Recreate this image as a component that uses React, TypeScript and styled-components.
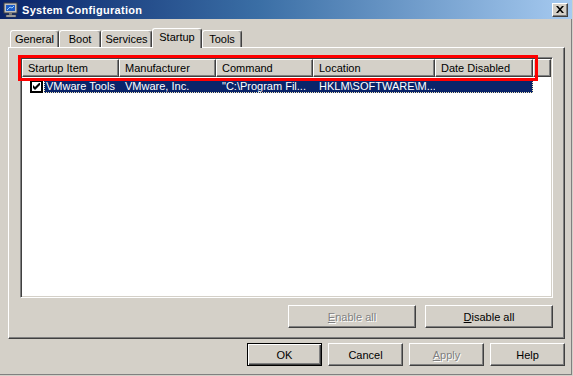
import React from 'react';
import styled, { createGlobalStyle } from 'styled-components';

const Global = createGlobalStyle`
  html, body { margin: 0; padding: 0; background: #D4D0C8; }
  body { font-family: "Liberation Sans", Arial, sans-serif; font-size: 11px; color: #000; }
  #root { width: 573px; height: 376px; }
`;

const Window = styled.div`
  width: 573px;
  height: 376px;
  box-sizing: border-box;
  background: #D4D0C8;
  display: flex;
  flex-direction: column;
  border-right: 1px solid #D4D0C8;
  border-bottom: 1px solid #D4D0C8;
  box-shadow: inset -1px -1px 0 #808080;
  overflow: hidden;
`;

const TitleBar = styled.div`
  height: 19px;
  flex: none;
  display: flex;
  align-items: center;
  padding: 0 3px 0 3px;
  background: linear-gradient(to right, #0A246A 0%, #3A6EA5 45%, #A6CAF0 100%);
  color: #fff;
  font-weight: bold;
  font-size: 11px;
`;

const TitleIcon = styled.svg`
  width: 16px;
  height: 16px;
  flex: none;
  margin-right: 3px;
`;

const TitleText = styled.span`
  flex: 1;
  white-space: nowrap;
  letter-spacing: 0.3px;
`;

const CloseButton = styled.div`
  width: 16px;
  height: 14px;
  box-sizing: border-box;
  background: #D4D0C8;
  border-top: 1px solid #fff;
  border-left: 1px solid #fff;
  border-right: 1px solid #404040;
  border-bottom: 1px solid #404040;
  box-shadow: inset -1px -1px 0 #808080;
  display: flex;
  align-items: center;
  justify-content: center;
  margin-right: 1px;
`;

const Body = styled.div`
  flex: 1;
  display: flex;
  flex-direction: column;
  padding: 9px 7px 0 8px;
`;

const TabStrip = styled.div`
  display: flex;
  align-items: flex-end;
  height: 19px;
  padding-left: 2px;
  position: relative;
  z-index: 1;
`;

const Tab = styled.div<{ $w: number; $active?: boolean }>`
  box-sizing: border-box;
  width: ${(p) => p.$w}px;
  height: ${(p) => (p.$active ? 20 : 17)}px;
  margin-bottom: ${(p) => (p.$active ? -1 : 0)}px;
  background: #D4D0C8;
  border-top: 1px solid #fff;
  border-left: 1px solid #fff;
  border-right: 1px solid #404040;
  box-shadow: inset -1px 0 0 #808080;
  border-radius: 3px 3px 0 0;
  display: flex;
  justify-content: center;
  align-items: flex-start;
  padding-top: 2px;
  white-space: nowrap;
`;

const Panel = styled.div`
  position: relative;
  box-sizing: border-box;
  height: 292px;
  flex: none;
  border-top: 1px solid #fff;
  border-left: 1px solid #fff;
  border-right: 1px solid #404040;
  border-bottom: 1px solid #404040;
  box-shadow: inset -1px -1px 0 #808080;
  padding: 9px 11px 0 11px;
  display: flex;
  flex-direction: column;
`;

const Highlight = styled.div`
  position: absolute;
  left: 9px;
  top: 7px;
  width: 520px;
  height: 26px;
  box-sizing: border-box;
  border: 3px solid #FF0000;
  z-index: 2;
  pointer-events: none;
`;

const ListView = styled.div`
  box-sizing: border-box;
  height: 241px;
  flex: none;
  background: #fff;
  border-top: 1px solid #808080;
  border-left: 1px solid #808080;
  border-right: 1px solid #fff;
  border-bottom: 1px solid #fff;
  box-shadow: inset 1px 1px 0 #404040, inset -1px -1px 0 #D4D0C8;
  padding: 1px;
  display: flex;
  flex-direction: column;
`;

const HeaderRow = styled.div`
  display: flex;
  height: 18px;
  flex: none;
`;

const HeaderCell = styled.div<{ $w?: number }>`
  box-sizing: border-box;
  ${(p) => (p.$w ? `width: ${p.$w}px; flex: none;` : 'flex: 1;')}
  height: 18px;
  background: #D4D0C8;
  border-top: 1px solid #fff;
  border-left: 1px solid #fff;
  border-right: 1px solid #404040;
  border-bottom: 1px solid #404040;
  box-shadow: inset -1px -1px 0 #808080;
  padding: 2px 0 0 5px;
  white-space: nowrap;
  overflow: hidden;
`;

const ItemRow = styled.div`
  display: flex;
  height: 13px;
  margin-top: 3px;
  flex: none;
`;

const CheckCell = styled.div`
  width: 22px;
  flex: none;
  box-sizing: border-box;
  padding-left: 8px;
`;

const CheckBox = styled.div`
  width: 13px;
  height: 13px;
  box-sizing: border-box;
  border: 2px solid #000;
  background: #fff;
  display: flex;
  align-items: center;
  justify-content: center;
`;

const SelectedBand = styled.div`
  display: grid;
  grid-template-columns: 75px 97px 97px 122px 98px;
  background: #0A246A;
  color: #fff;
  outline: 1px dotted #F0E8B8;
  outline-offset: -1px;
  height: 13px;
  line-height: 13px;
`;

const Cell = styled.div<{ $first?: boolean }>`
  padding-left: ${(p) => (p.$first ? 2 : 6)}px;
  white-space: nowrap;
  overflow: hidden;
`;

const PanelButtons = styled.div`
  display: flex;
  justify-content: flex-end;
  gap: 9px;
  margin-top: 7px;
`;

const Button = styled.button<{ $w: number; $default?: boolean }>`
  box-sizing: border-box;
  width: ${(p) => p.$w}px;
  height: 23px;
  padding: 0;
  margin: 0;
  font-family: "Liberation Sans", Arial, sans-serif;
  font-size: 11px;
  color: #000;
  background: #D4D0C8;
  border-radius: 0;
  ${(p) =>
    p.$default
      ? `border: 1px solid #000;
         box-shadow: inset 1px 1px 0 #fff, inset -1px -1px 0 #404040, inset -2px -2px 0 #808080;`
      : `border-top: 1px solid #fff;
         border-left: 1px solid #fff;
         border-right: 1px solid #404040;
         border-bottom: 1px solid #404040;
         box-shadow: inset -1px -1px 0 #808080;`}
  &:disabled {
    color: #808080;
    text-shadow: 1px 1px 0 #fff;
  }
`;

const Key = styled.span`
  text-decoration: underline;
`;

const DialogButtons = styled.div`
  display: flex;
  justify-content: flex-end;
  gap: 6px;
  margin-top: 4px;
`;

const columns = [
  { label: 'Startup Item', w: 97 },
  { label: 'Manufacturer', w: 97 },
  { label: 'Command', w: 97 },
  { label: 'Location', w: 122 },
  { label: 'Date Disabled', w: 98 },
];

const tabs = [
  { label: 'General', w: 49 },
  { label: 'Boot', w: 42 },
  { label: 'Services', w: 51 },
  { label: 'Startup', w: 50, active: true },
  { label: 'Tools', w: 40 },
];

export default function App() {
  return (
    <>
      <Global />
      <Window>
        <TitleBar>
          <TitleIcon viewBox="0 0 16 16">
            <rect x="1" y="1" width="13" height="10" fill="#C0C0C0" stroke="#404040" strokeWidth="1" />
            <rect x="3" y="3" width="9" height="6" fill="#1C5CC8" />
            <path d="M4 8 L7 5 L9 6 L11 4" stroke="#9FD4FF" strokeWidth="1" fill="none" />
            <rect x="6" y="11" width="3" height="2" fill="#808080" />
            <rect x="3" y="13" width="10" height="2" fill="#C0C0C0" stroke="#404040" strokeWidth="0.6" />
          </TitleIcon>
          <TitleText>System Configuration</TitleText>
          <CloseButton>
            <svg width="8" height="7" viewBox="0 0 8 7">
              <path d="M0 0h2l2 2.2L6 0h2L5 3.5 8 7H6L4 4.8 2 7H0l3-3.5z" fill="#000" />
            </svg>
          </CloseButton>
        </TitleBar>
        <Body>
          <TabStrip>
            {tabs.map((t) => (
              <Tab key={t.label} $w={t.w} $active={t.active}>
                {t.label}
              </Tab>
            ))}
          </TabStrip>
          <Panel>
            <Highlight />
            <ListView>
              <HeaderRow>
                {columns.map((c) => (
                  <HeaderCell key={c.label} $w={c.w}>
                    {c.label}
                  </HeaderCell>
                ))}
                <HeaderCell />
              </HeaderRow>
              <ItemRow>
                <CheckCell>
                  <CheckBox>
                    <svg width="7" height="7" viewBox="0 0 7 7">
                      <path d="M0 2v3l2 2 5-5V-1L2 4z" fill="#000" />
                    </svg>
                  </CheckBox>
                </CheckCell>
                <SelectedBand>
                  <Cell $first>VMware Tools</Cell>
                  <Cell>VMware, Inc.</Cell>
                  <Cell>"C:\Program Fil...</Cell>
                  <Cell>HKLM\SOFTWARE\M...</Cell>
                  <Cell></Cell>
                </SelectedBand>
              </ItemRow>
            </ListView>
            <PanelButtons>
              <Button $w={128} disabled>
                <Key>E</Key>nable all
              </Button>
              <Button $w={128}>
                <Key>D</Key>isable all
              </Button>
            </PanelButtons>
          </Panel>
          <DialogButtons>
            <Button $w={75} $default>
              OK
            </Button>
            <Button $w={75}>Cancel</Button>
            <Button $w={75} disabled>
              <Key>A</Key>pply
            </Button>
            <Button $w={75}>Help</Button>
          </DialogButtons>
        </Body>
      </Window>
    </>
  );
}
